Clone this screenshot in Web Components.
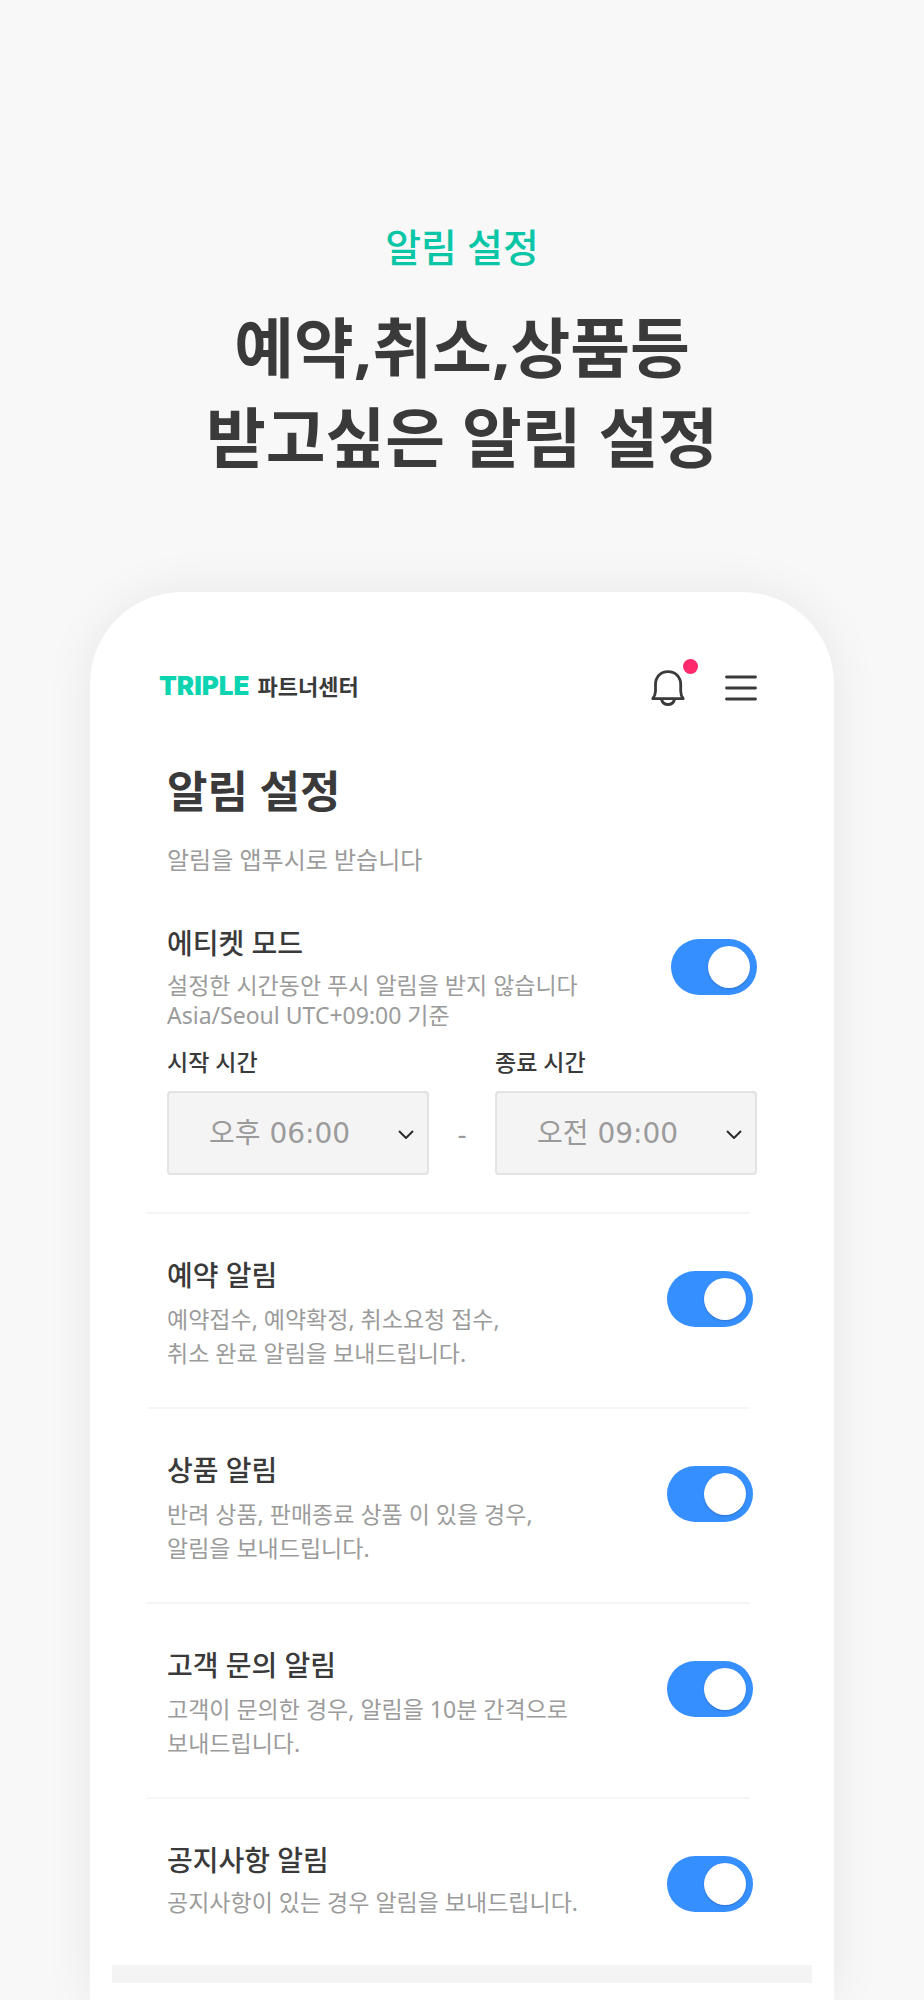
<!DOCTYPE html>
<html lang="ko">
<head>
<meta charset="UTF-8">
<meta name="viewport" content="width=device-width, initial-scale=1">
<title>알림 설정</title>
<style>
    body {
        margin: 0;
        min-height: 100vh;
        display: flex;
        flex-direction: column;
        background: #f8f8f8;
        color: #3a3a3a;
        font-family: "Noto Sans", "Noto Sans CJK KR", sans-serif;
        --muted: #9b9b9b;
        --brand: #0ac6a6;
        --switch: #368fff;
    }
</style>
</head>
<body>
<promo-hero>
    <span slot="eyebrow">알림 설정</span>
    예약,취소,상품등<br>받고싶은 알림 설정
</promo-hero>

<phone-card>
    <app-header></app-header>
    <page-title>
        알림 설정
        <span slot="sub">알림을 앱푸시로 받습니다</span>
    </page-title>

    <setting-row compact>
        에티켓 모드
        <span slot="desc">설정한 시간동안 푸시 알림을 받지 않습니다<br>Asia/Seoul UTC+09:00 기준</span>
    </setting-row>
    <time-range>
        <time-field slot="start" label="시작 시간" value="오후 06:00"></time-field>
        <time-field slot="end" label="종료 시간" value="오전 09:00"></time-field>
    </time-range>

    <setting-row divided>
        예약 알림
        <span slot="desc">예약접수, 예약확정, 취소요청 접수,<br>취소 완료 알림을 보내드립니다.</span>
    </setting-row>
    <setting-row divided>
        상품 알림
        <span slot="desc">반려 상품, 판매종료 상품 이 있을 경우,<br>알림을 보내드립니다.</span>
    </setting-row>
    <setting-row divided>
        고객 문의 알림
        <span slot="desc">고객이 문의한 경우, 알림을 10분 간격으로<br>보내드립니다.</span>
    </setting-row>
    <setting-row divided compact>
        공지사항 알림
        <span slot="desc">공지사항이 있는 경우 알림을 보내드립니다.</span>
    </setting-row>
    <section-bar></section-bar>
</phone-card>

<script>
// Attach an open shadow root filled with the given markup
class BaseElement extends HTMLElement {
    constructor() {
        super();
        this.attachShadow({ mode: 'open' });
        this.shadowRoot.innerHTML = this.render();
    }
}

// Headline above the phone
class PromoHero extends BaseElement {
    render() {
        return `
            <style>
                :host {
                    display: block;
                    padding: 222px 24px 110px;
                    text-align: center;
                }
                p {
                    margin: 0 0 30px;
                    font-size: 39px;
                    line-height: 50px;
                    font-weight: 500;
                    color: var(--brand);
                }
                h1 {
                    margin: 0;
                    font-size: 65px;
                    line-height: 90px;
                    font-weight: 700;
                }
            </style>
            <p><slot name="eyebrow"></slot></p>
            <h1><slot></slot></h1>
        `;
    }
}

// White phone screen
class PhoneCard extends BaseElement {
    render() {
        return `
            <style>
                :host {
                    display: block;
                    flex: 1;
                    margin: 0 90px;
                    padding-top: 73px;
                    background: #fff;
                    border-radius: 92px 92px 0 0;
                    box-shadow: 0 0 50px rgba(0, 0, 0, 0.07);
                }
            </style>
            <slot></slot>
        `;
    }
}

// Logo, bell and menu
class AppHeader extends BaseElement {
    render() {
        return `
            <style>
                :host {
                    display: flex;
                    align-items: center;
                    justify-content: space-between;
                    height: 46px;
                    padding: 0 77px 0 69px;
                }
                .logo {
                    display: flex;
                    align-items: center;
                    gap: 8px;
                    padding-bottom: 4px;
                    color: inherit;
                    text-decoration: none;
                    font-size: 22px;
                    line-height: 40px;
                    font-weight: 700;
                }
                .logo b {
                    font-family: Inter, "Noto Sans", sans-serif;
                    font-size: 26px;
                    color: #0dd4b0;
                }
                nav {
                    display: flex;
                    gap: 40px;
                }
                button {
                    position: relative;
                    display: block;
                    padding: 0;
                    border: 0;
                    background: none;
                    color: inherit;
                }
                svg {
                    display: block;
                    fill: none;
                    stroke: currentColor;
                    stroke-linecap: round;
                    stroke-linejoin: round;
                }
                .badge {
                    position: absolute;
                    top: -11px;
                    right: -13px;
                    width: 15px;
                    height: 15px;
                    border-radius: 50%;
                    background: #ff2a6b;
                }
            </style>
            <a class="logo" href="#"><b>TRIPLE</b><span>파트너센터</span></a>
            <nav>
                <button type="button" aria-label="알림">
                    <svg width="34" height="36" viewBox="0 0 34 36" stroke-width="2.8">
                        <path d="M1.8 28.7H32.2C30 25.8 29.7 24.5 29.7 21V14.5C29.7 7 24.5 1.6 17 1.6S4.500 7 4.500 14.500V21C4.500 24.500 4 25.800 1.800 28.700Z"/>
                        <path d="M10.5 29.5C11.5 33 14 34.5 17 34.5S22.500 33 23.500 29.500"/>
                    </svg>
                    <span class="badge"></span>
                </button>
                <button type="button" aria-label="메뉴">
                    <svg width="32" height="36" viewBox="0 0 32 36" stroke-width="2.8">
                        <path d="M1.5 7H30.5M1.5 18H30.5M1.5 29H30.5"/>
                    </svg>
                </button>
            </nav>
        `;
    }
}

class PageTitle extends BaseElement {
    render() {
        return `
            <style>
                :host {
                    display: block;
                    padding: 50px 77px 49px;
                }
                h2 {
                    margin: 0 0 22px;
                    font-size: 44px;
                    line-height: 60px;
                    font-weight: 700;
                }
                p {
                    margin: 0;
                    font-size: 24px;
                    line-height: 34px;
                    color: var(--muted);
                }
            </style>
            <h2><slot></slot></h2>
            <p><slot name="sub"></slot></p>
        `;
    }
}

// One notification setting with its switch
class SettingRow extends BaseElement {
    render() {
        return `
            <style>
                :host {
                    display: block;
                }
                hr {
                    display: none;
                    height: 2px;
                    margin: 0 84px 44px 57px;
                    border: 0;
                    background: #f5f5f5;
                }
                .row {
                    display: flex;
                    justify-content: space-between;
                    align-items: flex-start;
                    gap: 16px;
                    padding: 0 77px;
                }
                label {
                    display: block;
                    margin-bottom: 10px;
                    font-size: 28px;
                    line-height: 34px;
                    font-weight: 500;
                }
                p {
                    margin: 0;
                    font-size: 23px;
                    line-height: 34px;
                    color: var(--muted);
                }
                :host([divided]) hr {
                    display: block;
                }
                :host([divided]) .row {
                    padding: 0 81px 37px 77px;
                }
                :host([compact]) p {
                    line-height: 30px;
                }
                input {
                    appearance: none;
                    flex: none;
                    display: flex;
                    justify-content: flex-end;
                    box-sizing: border-box;
                    width: 86px;
                    height: 56px;
                    margin: 13px 0 0;
                    padding: 7px;
                    border-radius: 28px;
                    background: #d5d5d5;
                }
                input:checked {
                    background: var(--switch);
                }
                input::before {
                    content: "";
                    width: 42px;
                    height: 42px;
                    border-radius: 50%;
                    background: #fff;
                    box-shadow: 0 1px 2px rgba(0, 0, 0, 0.2);
                }
                input:not(:checked) {
                    justify-content: flex-start;
                }
            </style>
            <hr>
            <div class="row">
                <div>
                    <label for="toggle"><slot></slot></label>
                    <p id="desc"><slot name="desc"></slot></p>
                </div>
                <input id="toggle" type="checkbox" role="switch" aria-describedby="desc" checked>
            </div>
        `;
    }
}

class TimeRange extends BaseElement {
    render() {
        return `
            <style>
                :host {
                    display: grid;
                    grid-template-columns: 1fr 66px 1fr;
                    align-items: end;
                    padding: 15px 77px 37px;
                }
                .dash {
                    line-height: 84px;
                    font-size: 28px;
                    text-align: center;
                    color: var(--muted);
                }
            </style>
            <slot name="start"></slot>
            <span class="dash">-</span>
            <slot name="end"></slot>
        `;
    }
}

class TimeField extends BaseElement {
    render() {
        const value = this.getAttribute('value');
        return `
            <style>
                :host {
                    display: block;
                }
                label {
                    display: block;
                    margin-bottom: 12px;
                    font-size: 23px;
                    line-height: 34px;
                    font-weight: 500;
                }
                .box {
                    display: grid;
                    align-items: center;
                }
                select, svg {
                    grid-area: 1 / 1;
                }
                select {
                    appearance: none;
                    width: 100%;
                    height: 84px;
                    padding: 0 40px;
                    border: 2px solid #e3e3e3;
                    border-radius: 4px;
                    background: #f4f4f4;
                    color: var(--muted);
                    font-family: "DejaVu Sans", "Noto Sans CJK KR", sans-serif;
                    font-size: 28px;
                }
                svg {
                    justify-self: end;
                    margin-right: 14px;
                    pointer-events: none;
                    fill: none;
                    stroke: #2c2c2c;
                    stroke-width: 2;
                }
            </style>
            <label for="time">${this.getAttribute('label')}</label>
            <div class="box">
                <select id="time"><option>${value}</option></select>
                <svg width="18" height="12" viewBox="0 0 18 12"><path d="M2 4L9 11L16 4"/></svg>
            </div>
        `;
    }
}

class SectionBar extends BaseElement {
    render() {
        return `
            <style>
                :host {
                    display: block;
                    height: 18px;
                    margin: 11px 22px 0;
                    background: #f4f4f4;
                }
            </style>
        `;
    }
}

customElements.define('promo-hero', PromoHero);
customElements.define('phone-card', PhoneCard);
customElements.define('app-header', AppHeader);
customElements.define('page-title', PageTitle);
customElements.define('setting-row', SettingRow);
customElements.define('time-range', TimeRange);
customElements.define('time-field', TimeField);
customElements.define('section-bar', SectionBar);
</script>
</body>
</html>
